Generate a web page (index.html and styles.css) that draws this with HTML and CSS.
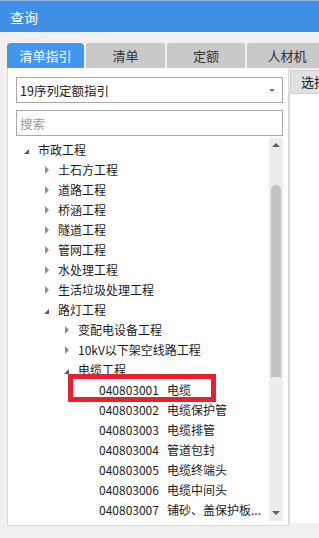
FILE: index.html
```html
<!DOCTYPE html>
<html lang="zh">
<head>
    <meta charset="UTF-8">
    <meta name="viewport" content="width=device-width, initial-scale=1.0">
    <title>查询</title>
    <link rel="stylesheet" href="styles.css">
</head>
<body>
    <header class="titlebar">查询</header>
    <nav class="tabs">
        <div class="tab active">清单指引</div>
        <div class="tab">清单</div>
        <div class="tab">定额</div>
        <div class="tab">人材机</div>
    </nav>
    <div class="main">
        <section class="panel">
            <div class="select">
                <span>19序列定额指引</span>
                <span class="caret"></span>
            </div>
            <div class="search">搜索</div>
            <div class="tree-wrap">
                <ul class="tree">
                    <li class="lv0 open"><i></i>市政工程</li>
                    <li class="lv1"><i></i>土石方工程</li>
                    <li class="lv1"><i></i>道路工程</li>
                    <li class="lv1"><i></i>桥涵工程</li>
                    <li class="lv1"><i></i>隧道工程</li>
                    <li class="lv1"><i></i>管网工程</li>
                    <li class="lv1"><i></i>水处理工程</li>
                    <li class="lv1"><i></i>生活垃圾处理工程</li>
                    <li class="lv1 open"><i></i>路灯工程</li>
                    <li class="lv2"><i></i>变配电设备工程</li>
                    <li class="lv2"><i></i>10kV以下架空线路工程</li>
                    <li class="lv2 open"><i></i>电缆工程</li>
                    <li class="lv3"><span class="code">040803001</span>电缆</li>
                    <li class="lv3"><span class="code">040803002</span>电缆保护管</li>
                    <li class="lv3"><span class="code">040803003</span>电缆排管</li>
                    <li class="lv3"><span class="code">040803004</span>管道包封</li>
                    <li class="lv3"><span class="code">040803005</span>电缆终端头</li>
                    <li class="lv3"><span class="code">040803006</span>电缆中间头</li>
                    <li class="lv3"><span class="code">040803007</span>铺砂、盖保护板...</li>
                    <li class="lv2"><i></i>配管、配线工程</li>
                </ul>
                <div class="scrollbar">
                    <span class="arrow up"></span>
                    <span class="thumb"></span>
                    <span class="arrow down"></span>
                </div>
            </div>
        </section>
        <aside class="side">
            <div class="side-btn">选择</div>
            <div class="side-body"></div>
        </aside>
    </div>
    <div class="highlight"></div>
</body>
</html>
```

FILE: styles.css
```css
body {
    margin: 0;
    width: 319px;
    height: 538px;
    overflow: hidden;
    background: #f0f0f0;
    font-family: "Noto Sans CJK SC", "Noto Sans", sans-serif;
    font-size: 12px;
    color: #1a1a1a;
    position: relative;
}

.titlebar {
    height: 32px;
    line-height: 32px;
    background: #3f8fe6;
    border-top: 1px solid #8fb6e0;
    box-sizing: border-box;
    color: #fff;
    font-size: 14px;
    padding-left: 10px;
}

.tabs {
    display: flex;
    gap: 2px;
    margin-top: 11px;
    padding-left: 7px;
    height: 25px;
}

.tab {
    flex: none;
    width: 78px;
    background: #c9c9c9;
    color: #333;
    text-align: center;
    line-height: 25px;
    font-size: 13px;
    border-radius: 2px 2px 0 0;
}

.tab:nth-child(1) { width: 77px; }
.tab:nth-child(2) { width: 79px; }
.tab:nth-child(4) { width: 80px; }

.tab.active {
    background: #4396ee;
    color: #fff;
    border-radius: 4px 4px 0 0;
}

.main {
    display: flex;
    height: 458px;
    padding-left: 7px;
}

.panel {
    width: 282px;
    flex: none;
    box-sizing: border-box;
    background: #fff;
    border: 1px solid #dadada;
    border-top: none;
    padding: 9px 5px 0 8px;
}

.select,
.search {
    height: 26px;
    box-sizing: border-box;
    border: 1px solid #a9a9a9;
    display: flex;
    align-items: center;
    padding-left: 3px;
}

.select {
    justify-content: space-between;
    font-size: 12.5px;
}

.caret {
    width: 0;
    height: 0;
    border-left: 3px solid transparent;
    border-right: 3px solid transparent;
    border-top: 3px solid #777;
    margin-right: 7px;
}

.search {
    margin-top: 7px;
    color: #999;
    font-size: 12.5px;
}

.tree-wrap {
    display: flex;
    margin-top: 2px;
    height: 385px;
}

.tree {
    flex: 1;
    list-style: none;
    margin: 0;
    padding: 2px 0 0;
    overflow: hidden;
}

.tree li {
    height: 20px;
    line-height: 20px;
    white-space: nowrap;
    display: flex;
    align-items: center;
}

.tree i {
    width: 13px;
    height: 20px;
    flex: none;
    position: relative;
}

.tree i::before {
    content: "";
    position: absolute;
    left: 0;
    top: 6px;
    border-left: 4px solid #8c8c8c;
    border-top: 4px solid transparent;
    border-bottom: 4px solid transparent;
}

.tree li.open i::before {
    left: -1px;
    top: 9px;
    border: none;
    width: 0;
    height: 0;
    border-right: 5px solid #5b5b5b;
    border-top: 5px solid transparent;
}

.lv0 { padding-left: 9px; }
.lv1 { padding-left: 29px; }
.lv2 { padding-left: 49px; }
.lv3 { padding-left: 83px; }

.code {
    margin-right: 8px;
}

.scrollbar {
    width: 14px;
    flex: none;
    background: #ececec;
    display: flex;
    flex-direction: column;
    align-items: center;
    margin-bottom: 2px;
}

.arrow {
    width: 0;
    height: 0;
    border-left: 4px solid transparent;
    border-right: 4px solid transparent;
}

.arrow.up {
    border-bottom: 4px solid #606060;
    margin-top: 5px;
}

.arrow.down {
    border-top: 4px solid #606060;
    margin-top: auto;
    margin-bottom: 6px;
}

.thumb {
    width: 10px;
    height: 192px;
    margin-top: 38px;
    background: #c2c2c2;
    border-radius: 5px 5px 0 0;
}

.side {
    flex: 1;
    display: flex;
    flex-direction: column;
    overflow: hidden;
}

.side-btn {
    margin-top: 2px;
    margin-left: 1px;
    height: 22px;
    line-height: 22px;
    background: #e1e1e1;
    border: 1px solid #cfcfcf;
    border-right: none;
    padding-left: 10px;
    font-size: 13px;
    white-space: nowrap;
}

.side-body {
    flex: 1;
    background: #fff;
    border-left: 1px solid #d8d8d8;
    margin-bottom: 3px;
}

.highlight {
    position: absolute;
    left: 68px;
    top: 374px;
    width: 148px;
    height: 28px;
    box-sizing: border-box;
    border: 5px solid #e5222e;
}
```
